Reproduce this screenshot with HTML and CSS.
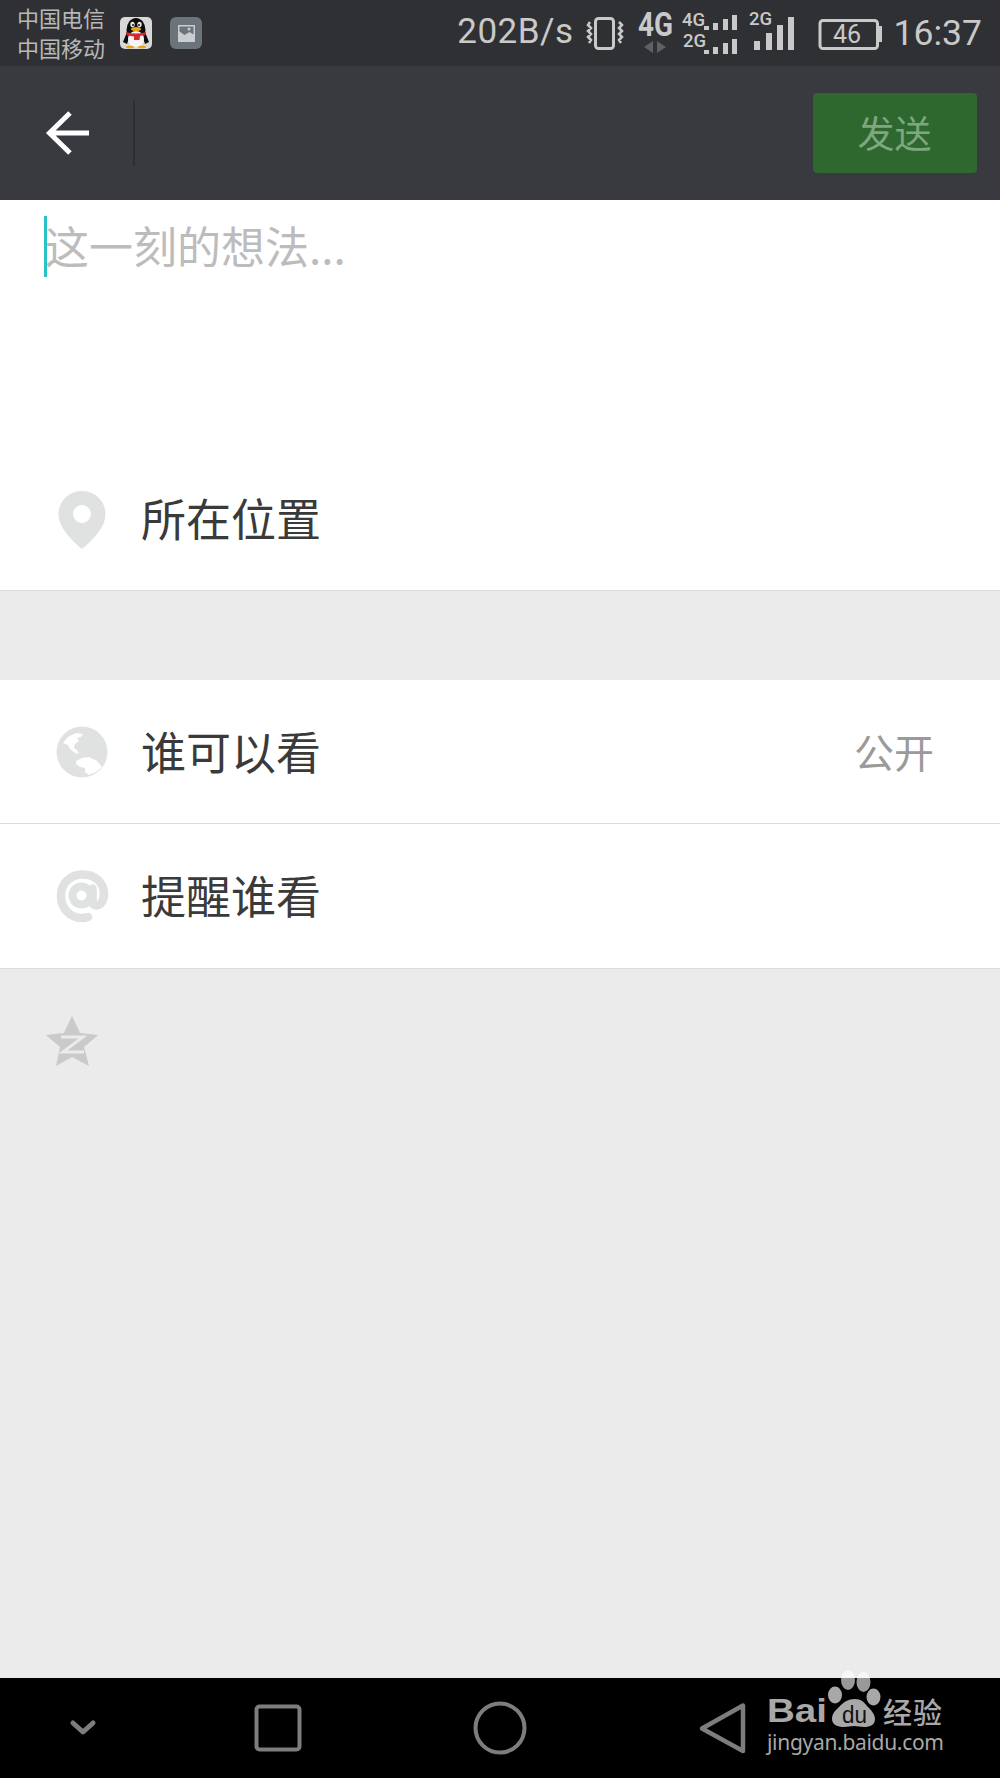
FILE: index.html
```html
<!DOCTYPE html>
<html lang="zh-CN">
<head>
<meta charset="utf-8">
<title>发表动态</title>
<link rel="stylesheet" href="styles.css">
</head>
<body>
<div class="app">
  <header class="status">
    <div class="carrier"><span>中国电信</span><span>中国移动</span></div>
    <svg class="s-qq" viewBox="120 17 32 32">
      <rect x="120" y="17" width="32" height="32" rx="5" fill="#d8d8d6"/>
      <ellipse cx="136" cy="30" rx="9.500" ry="12" fill="#0c0c0c"/>
      <path d="M127 32 L123 42 L127 44 L129 38Z M145 32 L149 42 L145 44 L143 38Z" fill="#0c0c0c"/>
      <ellipse cx="136" cy="39" rx="8" ry="8" fill="#f4f4f4"/>
      <ellipse cx="132.500" cy="24.500" rx="2.200" ry="2.800" fill="#e8e8e8"/>
      <ellipse cx="139.500" cy="24.500" rx="2.200" ry="2.800" fill="#e8e8e8"/>
      <circle cx="133" cy="25" r="1" fill="#111"/><circle cx="139" cy="25" r="1" fill="#111"/>
      <ellipse cx="136" cy="29" rx="5" ry="2" fill="#e8a413"/>
      <path d="M126 32 Q136 35 146 32 L145.500 35 L140 36 L139.500 40 L134 40 L134 36.500 L127 35.500Z" fill="#d9272b"/>
      <ellipse cx="130" cy="47" rx="4" ry="1.300" fill="#e8a413"/><ellipse cx="142" cy="47" rx="4" ry="1.300" fill="#e8a413"/>
    </svg>
    <svg class="s-gallery" viewBox="170 17 32 32">
      <rect x="170" y="17" width="32" height="32" rx="6" fill="#6b737b"/>
      <rect x="178" y="25" width="17" height="17" fill="#c9cdd0"/>
      <path d="M179.500 26.500h14v8l-4-2.500-5 3-5-3.500z" fill="#6b737b"/>
      <circle cx="189" cy="29" r="1.500" fill="#c9cdd0"/>
    </svg>
    <span class="speed">202B/s</span>
    <svg class="s-vib" viewBox="586 0 38 66">
      <rect x="595.500" y="18.500" width="18" height="30" rx="3" class="line"/>
      <path d="M590 22l-2 3 3 3-3 3 3 3-3 3 3 3-2 3M619 22l3 3-3 3 3 3-3 3 3 3-3 3 2 3" class="line thin"/>
    </svg>
    <svg class="s-4g" viewBox="636 0 38 66">
      <text x="638" y="36" class="g-big" textLength="35" lengthAdjust="spacingAndGlyphs">4G</text>
      <path d="M653 41v12l-9-6zM657 41v12l9-6z" fill="#5f6063"/>
    </svg>
    <svg class="s-dual" viewBox="681 0 57 66">
      <text x="682" y="26" class="g-small">4G</text>
      <text x="683" y="47" class="g-small">2G</text>
      <path class="fill" d="M704 26h5v4h-5zM713 23h5v7h-5zM723 19h5v11h-5zM732 15h5v15h-5zM704 50h5v4h-5zM713 47h5v7h-5zM723 43h5v11h-5zM732 39h5v15h-5z"/>
    </svg>
    <svg class="s-2g" viewBox="748 0 47 66">
      <text x="749" y="25" class="g-small">2G</text>
      <path class="fill" d="M754 41h6v9h-6zM766 33h6v17h-6zM777 25h6v25h-6zM788 17h6v33h-6z"/>
    </svg>
    <svg class="s-bat" viewBox="818 0 64 66">
      <rect x="820" y="20.500" width="57.500" height="28" rx="3" class="line"/>
      <path class="fill" d="M879 26h3v16h-3z"/>
      <text x="847" y="43" class="g-bat">46</text>
    </svg>
    <span class="time">16:37</span>
  </header>

  <div class="toolbar">
    <svg class="back" viewBox="46 66 44 134">
      <path d="M90 133H51M71 113L50.500 133L71 153" fill="none" stroke="#fff" stroke-width="5"/>
    </svg>
    <div class="divider"></div>
    <button class="send" type="button">发送</button>
  </div>

  <main class="content">
    <section class="card compose">
      <div class="field"><span class="placeholder">这一刻的想法...</span></div>
      <div class="row row-location">
        <svg class="icon" viewBox="56 484 52 66">
          <path fill-rule="evenodd" fill="#e0e1e1" d="M82 489c13 0 23.500 10 23.500 23 0 14-14 27-23.500 35-9.500-8-23.500-21-23.500-35 0-13 10.500-23 23.500-23zM82 503a9 9 0 1 0 0 18 9 9 0 0 0 0-18z"/>
        </svg>
        <span class="label">所在位置</span>
      </div>
    </section>

    <section class="card group">
      <div class="row row-who">
        <svg class="icon" viewBox="56 719 52 66">
          <circle cx="82" cy="752" r="25.500" fill="#e0e1e1"/>
          <path fill="#fff" d="M63 743l5-6 8-4 7 1-2 3-4 1 2 3-4 3-1 4 3 2 2 4-4-1-5-4-2-4-5-2z"/>
          <path fill="#fff" d="M76 761l6-3 7-1 8 4 5 6-6 5-7 3-4-3 0-4-5-1-4-3z"/>
        </svg>
        <span class="label">谁可以看</span>
        <span class="value">公开</span>
      </div>
      <div class="row row-remind">
        <svg class="icon" viewBox="56 863 52 66">
          <path fill="none" stroke="#e0e1e1" stroke-width="8.500" stroke-linecap="round" d="M88 917c-2 .6-4 1-6 1-12 0-21-9.500-21-22s9-21.500 21.500-21.500 21.500 8 21.500 19c0 7-3 12-7.500 12-3 0-4-2-4-5v-12"/>
          <circle cx="81.500" cy="895.500" r="9" fill="none" stroke="#e0e1e1" stroke-width="8"/>
        </svg>
        <span class="label">提醒谁看</span>
      </div>
    </section>

    <div class="qzone">
      <svg class="star" viewBox="46 1014 52 54">
        <path fill="#cacaca" d="M72 1016l8 17 18 2-14 12 5 19-17-9-16 9 4-19-14-12 18-2z"/>
        <path fill="none" stroke="#ebebeb" stroke-width="3" d="M61 1037h22l-20 15h21"/>
      </svg>
    </div>
  </main>

  <nav class="navbar">
    <svg class="nav-chevron" viewBox="60 1678 46 100">
      <path d="M73 1723l10 9 10-9" fill="none" stroke="#7d7d7d" stroke-width="5" stroke-linecap="round" stroke-linejoin="round"/>
    </svg>
    <svg class="nav-square" viewBox="254 1678 48 100">
      <rect x="256.500" y="1706.500" width="43" height="43" rx="3" fill="none" stroke="#7d7d7d" stroke-width="4"/>
    </svg>
    <svg class="nav-circle" viewBox="473 1678 54 100">
      <circle cx="500" cy="1728" r="24.500" fill="none" stroke="#7d7d7d" stroke-width="4"/>
    </svg>
    <svg class="nav-back" viewBox="698 1678 50 100">
      <path d="M743 1705.500v45.500l-41-22.500z" fill="none" stroke="#7d7d7d" stroke-width="4.500" stroke-linejoin="round"/>
    </svg>
  </nav>

  <svg class="watermark" viewBox="760 1668 190 96">
    <text x="767" y="1722" class="wm-bai" textLength="60" lengthAdjust="spacingAndGlyphs">Bai</text>
    <ellipse cx="848" cy="1680" rx="7" ry="10" fill="#fff" fill-opacity=".6"/>
    <ellipse cx="863.500" cy="1682" rx="7" ry="10" fill="#fff" fill-opacity=".6"/>
    <ellipse cx="835" cy="1695" rx="7" ry="8.500" fill="#a8a8a8"/>
    <ellipse cx="873.500" cy="1697" rx="7" ry="8.500" fill="#a8a8a8"/>
    <path fill="#a8a8a8" d="M855 1699c6 0 9 3 12 7 4 4 8 8 8 13 0 6-5 8-11 8-4 0-6-1-10-1s-6 1-10 1c-6 0-12-2-12-8 0-6 4-9 8-13 4-4 8-7 15-7z"/>
    <text x="842" y="1723" class="wm-du" textLength="25" lengthAdjust="spacingAndGlyphs">du</text>
    <text x="883" y="1724" class="wm-cn" textLength="59">经验</text>
    <text x="767" y="1750" class="wm-url" textLength="177">jingyan.baidu.com</text>
  </svg>
</div>
</body>
</html>
```

FILE: styles.css
```css
* { box-sizing: border-box; }
html, body { margin: 0; padding: 0; }
body {
  width: 1000px;
  height: 1778px;
  overflow: hidden;
  font-family: "Noto Sans CJK SC", "Noto Sans", sans-serif;
}
svg { display: block; flex: none; overflow: visible; }

.app {
  position: relative;
  display: flex;
  flex-direction: column;
  width: 1000px;
  height: 1778px;
  background: #ebebeb;
}

/* status bar */
.status {
  display: flex;
  align-items: center;
  flex: none;
  height: 66px;
  padding-left: 17px;
  background: #2f3034;
  color: #c9c9c9;
}
.carrier {
  display: flex;
  flex-direction: column;
  width: 89px;
  margin-top: -3px;
  font-size: 22px;
  line-height: 30px;
  color: #b8b8b8;
  white-space: nowrap;
}
.s-qq { width: 32px; height: 32px; margin-left: 14px; }
.s-gallery { width: 32px; height: 32px; margin-left: 18px; }
.speed {
  position: relative;
  top: -1px;
  margin-left: auto;
  font-family: Roboto, sans-serif;
  font-size: 35px;
  line-height: 66px;
  letter-spacing: .5px;
}
.s-vib { width: 38px; height: 66px; margin-left: 12px; }
.s-4g { width: 38px; height: 66px; margin-left: 12px; }
.s-dual { width: 57px; height: 66px; margin-left: 7px; }
.s-2g { width: 47px; height: 66px; margin-left: 10px; }
.s-bat { width: 64px; height: 66px; margin-left: 23px; }
.time {
  margin-left: 12px;
  margin-right: 18px;
  font-family: Roboto, sans-serif;
  font-size: 35.500px;
  line-height: 66px;
}
.line { fill: none; stroke: #c9c9c9; stroke-width: 3; }
.thin { stroke-width: 2.500; }
.fill { fill: #c9c9c9; }
.g-big { font: 700 33px Roboto, sans-serif; fill: #c9c9c9; }
.g-small { font: 500 18.500px Roboto, sans-serif; fill: #c9c9c9; }
.g-bat { font: 400 25px Roboto, sans-serif; fill: #c9c9c9; text-anchor: middle; }

/* toolbar */
.toolbar {
  display: flex;
  align-items: center;
  flex: none;
  height: 134px;
  padding-left: 45px;
  padding-right: 23px;
  background: #393a3f;
}
.back { width: 44px; height: 134px; }
.divider { width: 2px; height: 66px; margin-left: 44px; background: #2e2f33; }
.send {
  width: 164px;
  height: 80px;
  margin-left: auto;
  padding: 0 1px 2px 0;
  border: 0;
  border-radius: 4px;
  background: #2e682f;
  color: #7ea67f;
  font-family: inherit;
  font-size: 37px;
  line-height: 78px;
}

/* content */
.content { flex: 1; display: flex; flex-direction: column; }
.card { background: #fff; border-bottom: 1px solid #dcdcdc; }
.compose {
  display: flex;
  flex-direction: column;
  height: 391px;
}
.field {
  flex: 1;
  padding-top: 16px;
  padding-left: 44px;
}
.placeholder {
  display: block;
  height: 61px;
  border-left: 3px solid #2ac2c9;
  margin-right: 600px;
  font-size: 44px;
  line-height: 59px;
  color: #bcbcbc;
  white-space: nowrap;
  text-indent: -2px;
}
.group { margin-top: 89px; }
.row {
  display: flex;
  align-items: center;
  padding-left: 56px;
  padding-right: 66px;
}
.row-location { height: 120px; padding-bottom: 22px; }
.row-who { height: 144px; border-bottom: 1px solid #dcdcdc; }
.row-remind { height: 144px; }
.icon { width: 52px; height: 66px; margin-right: 33px; }
.label {
  margin-bottom: 2px;
  font-size: 45px;
  line-height: 60px;
  color: #3a3a3a;
  white-space: nowrap;
}
.value {
  margin-left: auto;
  margin-bottom: 2px;
  font-size: 40px;
  line-height: 60px;
  color: #9a9a9a;
}
.qzone { padding-top: 45px; padding-left: 46px; }
.star { width: 52px; height: 54px; }

/* nav bar */
.navbar {
  display: flex;
  flex: none;
  height: 100px;
  background: #000;
}
.navbar svg { height: 100px; }
.nav-chevron { width: 46px; margin-left: 60px; }
.nav-square { width: 48px; margin-left: 148px; }
.nav-circle { width: 54px; margin-left: 171px; }
.nav-back { width: 50px; margin-left: 171px; }

/* watermark overlay */
.watermark {
  position: absolute;
  left: 760px;
  top: 1668px;
  width: 190px;
  height: 96px;
}
.wm-bai { font: 700 33px "Liberation Sans", sans-serif; fill: #a8a8a8; }
.wm-du { font: 400 23px "Liberation Sans", sans-serif; fill: #111; }
.wm-cn { font: 500 29px "Noto Sans CJK SC", sans-serif; fill: #a8a8a8; }
.wm-url { font: 400 21px "Noto Sans", sans-serif; fill: #a8a8a8; }
```
